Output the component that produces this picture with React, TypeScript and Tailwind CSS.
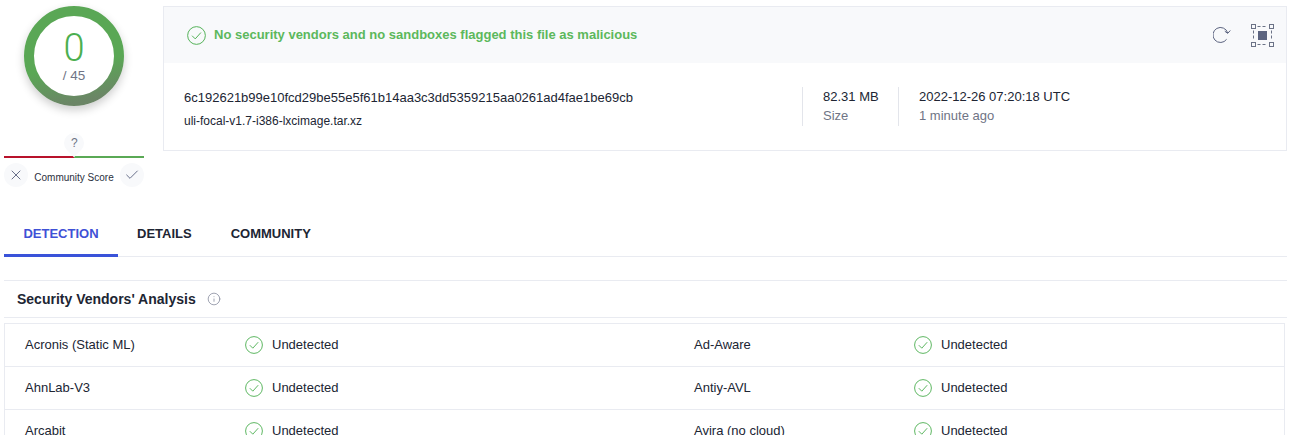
import { Check, X, Info } from 'lucide-react';

const vendors = [
  ['Acronis (Static ML)', 'Ad-Aware'],
  ['AhnLab-V3', 'Antiy-AVL'],
  ['Arcabit', 'Avira (no cloud)'],
];

function CheckCircle({ size = 18 }: { size?: number }) {
  return (
    <svg width={size} height={size} viewBox="0 0 18 18" fill="none" className="shrink-0 text-[#4caf50]">
      <circle cx="9" cy="9" r="8.4" stroke="currentColor" strokeWidth="0.9" />
      <path d="M4.8 9.2l3 3 5.4-6" stroke="currentColor" strokeWidth="0.9" />
    </svg>
  );
}

function Gauge() {
  return (
    <div className="relative mx-auto w-[100px] h-[100px] rounded-full shadow-[0_4px_10px_rgba(0,0,0,0.2)]">
      <svg width="100" height="100" viewBox="0 0 100 100">
        <defs>
          <linearGradient id="ring" x1="0.4" y1="0" x2="0.6" y2="1">
            <stop offset="0.6" stopColor="#5aa755" />
            <stop offset="1" stopColor="#6b8566" />
          </linearGradient>
        </defs>
        <circle cx="50" cy="50" r="45" fill="white" stroke="url(#ring)" strokeWidth="10" />
      </svg>
      <div className="absolute inset-0 flex flex-col items-center">
        <span className="mt-[21px] text-[38px] leading-[42px] font-light text-[#4caf50] font-['Roboto',sans-serif]">0</span>
        <span className="text-[13.5px] leading-[16px] text-[#6f7485] -mt-[1px]">/ 45</span>
      </div>
    </div>
  );
}

function CommunityScore() {
  return (
    <div className="mt-[26px] w-[140px] flex flex-col">
      <div className="h-[24px] flex justify-center pt-[1px]">
        <div className="w-[20px] h-[20px] rotate-45 rounded-full rounded-br-[6px] bg-[#f8f9fb] flex items-center justify-center">
          <span className="-rotate-45 text-[12px] text-[#6f7485]">?</span>
        </div>
      </div>
      <div className="flex h-[2px]">
        <div className="w-1/2 bg-[#b8122b]" />
        <div className="w-1/2 bg-[#5aa955]" />
      </div>
      <div className="flex items-center justify-between mt-[5px]">
        <div className="w-6 h-6 rounded-full bg-[#f8f9fb] flex items-center justify-center text-[#5c6480]">
          <X size={16} strokeWidth={1.4} />
        </div>
        <span className="text-[10px] text-[#2b3040] mt-[4px]">Community Score</span>
        <div className="w-6 h-6 rounded-full bg-[#f8f9fb] flex items-center justify-center text-[#5c6480]">
          <Check size={16} strokeWidth={1.4} />
        </div>
      </div>
    </div>
  );
}

function ReanalyzeIcon() {
  return (
    <svg width="20" height="20" viewBox="0 0 20 20" fill="none" stroke="#5c6480" strokeWidth="1">
      <path d="M13.6 14.3A7.5 7.5 0 1 1 14.7 8" />
      <path d="M11.8 6.2l2.9 2.2 2.6-2.9" />
    </svg>
  );
}

function ExpandIcon() {
  return (
    <svg width="23" height="23" viewBox="0 0 23 23" fill="none" stroke="#6b7286" strokeWidth="1">
      <rect x="0.5" y="0.5" width="4" height="4" />
      <rect x="18.5" y="0.5" width="4" height="4" />
      <rect x="0.5" y="18.5" width="4" height="4" />
      <rect x="18.5" y="18.5" width="4" height="4" />
      <path d="M6.5 2.5h10M6.5 20.5h10M2.5 6.5v10M20.5 6.5v10" strokeDasharray="3 2" />
      <path d="M7 7h9v9h-9z" fill="#5c6480" stroke="none" />
    </svg>
  );
}

export default function App() {
  return (
    <div className="w-[1294px] h-[435px] overflow-hidden bg-white text-[#202533] font-['Liberation_Sans',Arial,sans-serif]">
      <div className="flex pt-[6px] pl-[4px] pr-[7px]">
        <div className="w-[140px] shrink-0">
          <Gauge />
          <CommunityScore />
        </div>

        <div className="ml-[19px] flex-1 h-[145px] border border-[#e9ebf1]">
          <div className="h-[56px] bg-[#f8f9fb] flex items-center pl-[23px] pr-[12px]">
            <CheckCircle size={19} />
            <span className="ml-[8px] text-[13px] font-bold text-[#5cb85c]">No security vendors and no sandboxes flagged this file as malicious</span>
            <div className="ml-auto">
              <ReanalyzeIcon />
            </div>
            <div className="ml-[18px]">
              <ExpandIcon />
            </div>
          </div>
          <div className="flex items-center h-[87px] pl-[20px] pt-[4px]">
            <div className="w-[618px]">
              <div className="text-[13px] leading-[16px]">6c192621b99e10fcd29be55e5f61b14aa3c3dd5359215aa0261ad4fae1be69cb</div>
              <div className="text-[12px] leading-[14px] mt-[8px]">uli-focal-v1.7-i386-lxcimage.tar.xz</div>
            </div>
            <div className="border-l border-[#e3e5eb] h-[39px] -mt-[4px] pl-[20px] w-[96px] pt-[2px]">
              <div className="text-[13px] leading-[16px]">82.31 MB</div>
              <div className="text-[13px] leading-[16px] mt-[3px] text-[#6f7485]">Size</div>
            </div>
            <div className="border-l border-[#e3e5eb] h-[39px] -mt-[4px] pl-[20px] pt-[2px]">
              <div className="text-[13px] leading-[16px]">2022-12-26 07:20:18 UTC</div>
              <div className="text-[13px] leading-[16px] mt-[3px] text-[#6f7485]">1 minute ago</div>
            </div>
          </div>
        </div>
      </div>

      <div className="ml-[4px] mr-[7px] mt-[23px] h-[47px] flex border-b border-[#e9ebf1] text-[13px] font-bold">
        <div className="w-[114px] border-b-[3px] border-[#3a53d9] text-[#3f51d6] flex items-center justify-center h-[47px] pt-[3px]">DETECTION</div>
        <div className="ml-[19px] flex items-center h-[46px] pt-[1px]">DETAILS</div>
        <div className="ml-[39px] flex items-center h-[46px] pt-[1px]">COMMUNITY</div>
      </div>

      <div className="ml-[4px] mr-[7px] mt-[23px] h-[38px] flex items-center border-y border-[#e9ebf1] pl-[13px]">
        <span className="text-[14px] font-bold">Security Vendors' Analysis</span>
        <Info size={14} strokeWidth={1.4} className="ml-[11px] text-[#8a90a0]" />
      </div>

      <div className="ml-[4px] mr-[9px] mt-[5px] border border-[#e9ebf1]">
        {vendors.map(([a, b]) => (
          <div key={a} className="grid grid-cols-[669px_1fr] h-[43px] border-b border-[#e9ebf1] text-[13px]">
            {[a, b].map((name) => (
              <div key={name} className="flex items-center pl-[20px]">
                <span className="w-[220px]">{name}</span>
                <CheckCircle />
                <span className="ml-[9px]">Undetected</span>
              </div>
            ))}
          </div>
        ))}
      </div>
    </div>
  );
}
